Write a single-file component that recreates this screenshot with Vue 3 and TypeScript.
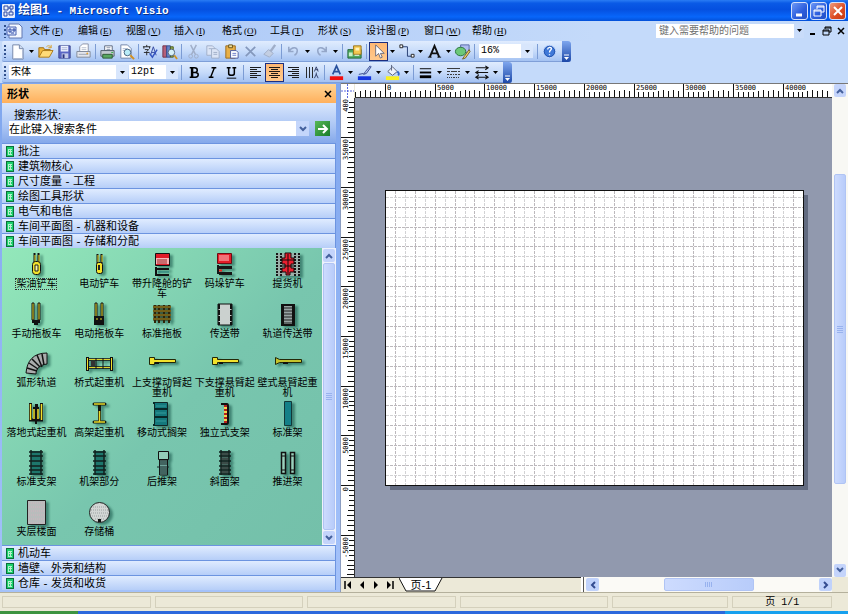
<script setup lang="ts">
import { ref } from 'vue'

interface Tool {
  kind: 'btn' | 'arrow' | 'sep'
  icon?: string
  label?: string
  active?: boolean
}

const b = (icon: string, label: string, active = false): Tool => ({ kind: 'btn', icon, label, active })
const arrow = (label: string): Tool => ({ kind: 'arrow', label })
const sep: Tool = { kind: 'sep' }

const menus = [
  { text: '文件', key: 'F' },
  { text: '编辑', key: 'E' },
  { text: '视图', key: 'V' },
  { text: '插入', key: 'I' },
  { text: '格式', key: 'O' },
  { text: '工具', key: 'T' },
  { text: '形状', key: 'S' },
  { text: '设计图', key: 'P' },
  { text: '窗口', key: 'W' },
  { text: '帮助', key: 'H' },
]

const standardTools: Tool[] = [
  b('new', '新建'), arrow('新建选项'), b('open', '打开'), b('save', '保存'), b('permission', '权限'), sep,
  b('print', '打印'), b('preview', '打印预览'), sep,
  b('spell', '拼写检查'), b('research', '信息检索'), sep,
  b('cut', '剪切'), b('copy', '复制'), b('paste', '粘贴'), b('remove', '删除'), b('painter', '格式刷'), sep,
  b('undo', '撤消'), arrow('撤消选项'), b('redo', '恢复'), arrow('恢复选项'), sep,
  b('shapes', '形状'), sep,
  b('pointer', '指针工具', true), arrow('指针选项'), b('connector', '连接线工具'), arrow('连接线选项'),
  b('text', '文本工具'), arrow('文本选项'), b('drawing', '绘图工具'), sep,
]

const formatTools: Tool[] = [
  sep, b('bold', '加粗'), b('italic', '倾斜'), b('underline', '下划线'), sep,
  b('left', '左对齐'), b('center', '居中', true), b('right', '右对齐'), b('vertical', '竖排文字'), sep,
  b('fontColor', '字体颜色'), arrow('字体颜色选项'), b('lineColor', '线条颜色'), arrow('线条颜色选项'),
  b('fill', '填充颜色'), arrow('填充颜色选项'), sep,
  b('weight', '线条粗细'), arrow('线条粗细选项'), b('pattern', '线型'), arrow('线型选项'),
  b('ends', '线端'), arrow('线端选项'),
]

/* Toolbar glyphs, each on an 18 x 18 grid */
const icons: Record<string, string> = {
  new: '<path d="M4 2h7l4 4v11H4z" fill="#fff" stroke="#7486a8"/><path d="M11 2v4h4" fill="#cfdcf2" stroke="#7486a8"/><path d="M14.500 7v9.500H5" fill="none" stroke="#a8b6d0"/>',
  open: '<path d="M2 15V5h5l1 2h6v3" fill="#f2b83c" stroke="#9a6b14"/><path d="M2 15l4-7h11l-4 7z" fill="#ffdc78" stroke="#a87818"/><path d="M10 4c2-2 4-1 5 1M15 2v3h-3" fill="none" stroke="#d8a030"/>',
  save: '<path d="M3 3h12v13H3z" fill="#5a66c4" stroke="#39448e"/><path d="M5 3h8v6H5z" fill="#eef2ff"/><path d="M6 11h7v5H6z" fill="#c4cbe8"/><path d="M7 12h2v4H7z" fill="#29337e"/><path d="M6 5h6M6 7h6" stroke="#a9b4d4"/>',
  permission: '<path d="M5 9V4l3-3h6v8z" fill="#fff" stroke="#8a93a8"/><path d="M2 9h14v6H2z" fill="#e4e6ec" stroke="#808898"/><path d="M7 5h5M7 7h5" stroke="#b8bfce"/><path d="M4 12h10" stroke="#9da4b4"/><circle cx="13" cy="11" r="1" fill="#e0a030"/>',
  print: '<path d="M6 8V3h8v5z" fill="#fff" stroke="#5a6880"/><path d="M2 8h14v6H2z" fill="#c3cad0" stroke="#52606c"/><path d="M4 12h10v4H4z" fill="#58a860" stroke="#2c5a34"/><path d="M8 5h4M8 7h4" stroke="#8894a8"/><path d="M13 10h2" stroke="#2eae40"/>',
  preview: '<path d="M3 2h7l4 4v10H3z" fill="#fff" stroke="#7486a8"/><path d="M5 6h5M5 8h3" stroke="#a8b6d0"/><circle cx="10" cy="10" r="3.500" fill="#b8ecf8" stroke="#44607c"/><path d="M13 13l4 4" stroke="#d29020" stroke-width="2"/>',
  spell: '<path d="M1 4h8M5 2v2M2 4v2M8 4v2M3 7h4l-2 2v4M2 10h6" fill="none" stroke="#222"/><path d="M9 13l3-9 3 9M10 10h4" fill="none" stroke="#3548a0"/><path d="M8 11l3 4 5-8" fill="none" stroke="#3454c0" stroke-width="1.500"/>',
  research: '<path d="M2 3h4v12H2z" fill="#b4607a" stroke="#713044"/><path d="M6 3h4v12H6z" fill="#6684ca" stroke="#344c90"/><path d="M10 4h3v11h-3z" fill="#90a850" stroke="#506020"/><circle cx="11" cy="10" r="3.500" fill="#d6f0f8" stroke="#53657c"/><path d="M14 13l3 4" stroke="#d09424" stroke-width="2"/>',
  cut: '<path d="M6 2l5 10M12 2L7 12" fill="none" stroke="#a0aec8" stroke-width="1.500"/><circle cx="6" cy="14" r="2" fill="none" stroke="#a0aec8"/><circle cx="12" cy="14" r="2" fill="none" stroke="#a0aec8"/>',
  copy: '<path d="M3 3h6l2 2v8H3z" fill="#dce5f6" stroke="#a0aec8"/><path d="M8 6h5l3 3v7H8z" fill="#dce5f6" stroke="#a0aec8"/><path d="M10 10h4M10 12h4M5 6h3" stroke="#a0aec8"/>',
  paste: '<path d="M3 3h10v13H3z" fill="#e8b048" stroke="#9a6a1c"/><path d="M6 2h4v3H6z" fill="#f0e0a0" stroke="#665218"/><path d="M8 8h6l2 2v6H8z" fill="#fff" stroke="#4b5aa4"/><path d="M10 11h4M10 13h4" stroke="#6878c8"/>',
  remove: '<path d="M4 4l10 10M14 4L4 14" fill="none" stroke="#8498bc" stroke-width="1.800"/>',
  painter: '<path d="M15 2l-5 7" stroke="#a0aec8" stroke-width="2.500"/><path d="M8 7l5 4-4 4-6-3z" fill="#c3cee2" stroke="#a0aec8"/>',
  undo: '<path d="M4 4v5h5M4 9c3-5 9-5 9-1 0 2-1 4-3 5" fill="none" stroke="#94a6c8" stroke-width="1.600"/>',
  redo: '<path d="M14 4v5H9M14 9C11 4 5 4 5 8c0 2 1 4 3 5" fill="none" stroke="#94a6c8" stroke-width="1.600"/>',
  shapes: '<path d="M2 7h14v9H2z" fill="#4ea860" stroke="#24663a"/><path d="M8 3h8v9H8z" fill="#f4c850" stroke="#9a741c"/><path d="M10 5h4v3h-4z" fill="#fff3b8"/><path d="M3 10h4v4H3z" fill="#c8f0c8"/><path d="M9 13h5" stroke="#fff"/>',
  pointer: '<path d="M6 2v12l3-3 2 5 2-1-2-4h4z" fill="#fff" stroke="#6a6a7a"/>',
  connector: '<path d="M4 4h6v10h5" fill="none" stroke="#223a70"/><path d="M2 2h3v3H2zM14 12h3v3h-3z" fill="#fff" stroke="#222"/>',
  text: '<path d="M4 15l5-12 5 12M6 11h6" fill="none" stroke="#111" stroke-width="2"/><path d="M2 15h4M12 15h4" stroke="#111"/>',
  drawing: '<path d="M7 2h9v8H7z" fill="#aebcf0" stroke="#5668a8"/><ellipse cx="7" cy="9" rx="5.500" ry="4.500" fill="#6cc878" stroke="#28743c"/><path d="M16 7l-5 7-2 3 3-1 5-7z" fill="#f4d468" stroke="#73622a"/>',
  help: '<circle cx="9" cy="9" r="6.500" fill="#3f78d8" stroke="#c0d4fa"/><circle cx="9" cy="9" r="5.500" fill="none" stroke="#2454ac"/><path d="M7 7c0-3 4-3 4-1 0 2-2 1-2 4M9 12v1" fill="none" stroke="#fff" stroke-width="1.400"/>',
  bold: '<path d="M5 4h5q3 0 3 2.500T10 9H7h4q3 0 3 2.500T11 14H5M7 4v10M8 4v10" fill="none" stroke="#000" stroke-width="1.600"/>',
  italic: '<path d="M8 4h5M5 14h5M11 4L7 14" fill="none" stroke="#000" stroke-width="1.500"/>',
  underline: '<path d="M4 4h4M10 4h4M6 4v6q0 2 3 2t3-2V4" fill="none" stroke="#000" stroke-width="1.600"/><path d="M4 15h10" stroke="#000"/>',
  left: '<path d="M3 4h12M3 6h8M3 8h12M3 10h8M3 12h12M3 14h8" stroke="#111" shape-rendering="crispEdges"/>',
  center: '<path d="M3 4h12M5 6h8M3 8h12M5 10h8M3 12h12M5 14h8" stroke="#111" shape-rendering="crispEdges"/>',
  right: '<path d="M3 4h12M7 6h8M3 8h12M7 10h8M3 12h12M7 14h8" stroke="#111" shape-rendering="crispEdges"/>',
  vertical: '<path d="M3 3v12M6 3v12M9 3v12" stroke="#222" shape-rendering="crispEdges"/><path d="M11 8l2-5 2 5M12 6h3M13 9v3M11 15l2-4 2 4" fill="none" stroke="#334068"/>',
  fontColor: '<path d="M5 11L9 2l4 9M6 8h6" fill="none" stroke="#28509c" stroke-width="1.800"/><path d="M2 13h14v4H2z" fill="#f01010"/>',
  lineColor: '<path d="M15 2l-5 6-2 3 3-1 5-7z" fill="#b8c6f4" stroke="#34488c"/><path d="M3 11l5-1" stroke="#34488c"/><path d="M2 13h14v4H2z" fill="#1538e0"/>',
  fill: '<path d="M4 8l5-5 5 5-5 4z" fill="#eef2fc" stroke="#55607a"/><path d="M8 1v6" stroke="#55607a"/><path d="M14 8c2 1 2 3 1 4" fill="none" stroke="#3164c8" stroke-width="2"/><path d="M2 13h14v4H2z" fill="#f8f020"/>',
  weight: '<path d="M3 5h12" stroke="#000"/><path d="M3 9h12" stroke="#000" stroke-width="2"/><path d="M3 13.500h12" stroke="#000" stroke-width="3"/>',
  pattern: '<g stroke="#333" shape-rendering="crispEdges"><path d="M2 5h14"/><path d="M2 8h14" stroke-dasharray="3 1"/><path d="M2 11h14" stroke-dasharray="2 1"/><path d="M2 14h14" stroke-dasharray="1 1"/></g>',
  ends: '<path d="M3 4h13M3 9h13M3 14h13M13 2l3 2-3 2M6 7L3 9l3 2M6 12l-3 2 3 2M13 12l3 2-3 2" fill="none" stroke="#111" stroke-width="1.200"/>',
}

const F = '#f2e22c'
const fork = (x: number, w: number, y: number, h: number) =>
  `<path d="M${x} ${y}h${w}v${h}h-${w}z" fill="${F}" stroke="#111"/>`
const rungs = (x: number, w: number, fill: string) =>
  `<path d="M${x} 1h${w}v24h-${w}z" fill="${fill}"/><path d="M${x} 0v25M${x + w} 0v25M${x - 2} 2h${w + 4}M${x - 2} 6h${w + 4}M${x - 2} 11h${w + 4}M${x - 2} 16h${w + 4}M${x - 2} 20h${w + 4}M${x - 2} 24h${w + 4}" stroke="#10201e" stroke-width="1.500"/>`

/* Stencil masters, each on a 30 x 26 grid */
const masters = [
  { name: '柴油铲车', art: '<path d="M13.500 1v10M17.500 1v10" stroke="#111" stroke-width="2"/><path d="M14 3v7M18 3v7" stroke="#f2e22c"/><rect x="11.500" y="9.500" width="8" height="13" rx="3" fill="#f2e22c" stroke="#111"/><path d="M14 13h3v6h-3z" fill="#faf6a0" stroke="#222"/>' },
  { name: '电动铲车', art: '<path d="M13.500 2v9M17.500 2v9" stroke="#111" stroke-width="2"/><path d="M14 3v7M18 3v7" stroke="#f2e22c"/><rect x="12.500" y="10.500" width="6" height="11" rx="2" fill="#f2e22c" stroke="#111"/><path d="M15 13v5" stroke="#222" stroke-width="2"/>' },
  { name: '带升降舱的铲车', art: '<path d="M8.500 1.500h14v12h-14z" fill="#e01c28" stroke="#111"/><path d="M9 6h13v6H9z" fill="#f8b4b8"/><path d="M11 7v5M13 7v5M15 7v5M17 7v5M19 7v5" stroke="#922"/><path d="M9 15v8h13M9 17h13" fill="none" stroke="#111" stroke-width="2"/><path d="M11 20h11" stroke="#237c7c"/>' },
  { name: '码垛铲车', art: '<path d="M7.500 1.500h14v10h-14z" fill="#e41c28" stroke="#6c0c14"/><path d="M10 3v6M12 3v6M14 3v6M16 3v6M18 3v6" stroke="#ffc8c8"/><path d="M7 13h2v9H7zM9 14h13v3H9zM9 20h13v3H9z" fill="#161616"/><path d="M9 18.500h3" stroke="#e22" stroke-width="2"/>' },
  { name: '提货机', art: '<path d="M3 1h24v23H3z" fill="#9aafa8"/><path d="M4 1v23M26 1v23M8 1v23M22 1v23" stroke="#161616" stroke-width="2" stroke-dasharray="2 1"/><path d="M12 1h6v5h3v6h-3v4h3v4h-4v3h-4v-3H9v-4h3v-4H9V6h3z" fill="#ec2030" stroke="#160808"/><path d="M9 8h12M9 14h12M15 2v20" stroke="#160808"/>' },
  { name: '手动拖板车', art: fork(11, 2, 1, 17) + fork(17, 2, 1, 17) + '<path d="M11 18h8v3h-8zM13 21h4v2h-4z" fill="#111"/>' },
  { name: '电动拖板车', art: fork(11, 2, 1, 14) + fork(17, 2, 1, 14) + '<path d="M10 14h10v9H10z" fill="#111"/><path d="M12 17h2M16 17h2" stroke="#e8da2c"/>' },
  { name: '标准拖板', art: '<path d="M6 5h18M6 9h18M6 13h18M6 17h18" stroke="#302408" stroke-width="3"/><path d="M8 3v18M12 3v18M17 3v18M22 3v18" stroke="#302408" stroke-width="2"/><path d="M6 5h18M6 9h18M6 13h18M6 17h18" stroke="#b89a28"/>' },
  { name: '传送带', art: '<path d="M8 2h14v21H8z" fill="#cbd1cf" stroke="#111"/><path d="M9 2v21M21 2v21" stroke="#111" stroke-width="2" stroke-dasharray="5 1"/>' },
  { name: '轨道传送带', art: '<path d="M9 3h12v20H9z" fill="#98a4a4" stroke="#111" stroke-width="2"/><path d="M11 6h8M11 9h8M11 12h8M11 15h8M11 18h8M11 21h8" stroke="#222"/><path d="M10 3v20M20 3v20" stroke="#111" stroke-width="2"/>' },
  { name: '弧形轨道', art: '<path d="M26 2C12 2 6 10 5 22l10 1c0-5 3-9 11-10z" fill="#a9acac" stroke="#111"/><path d="M21 3l2 11M16 4l5 12M11 8l8 8M8 12l9 6M6 17l10 3" stroke="#111" stroke-width="1.500"/>' },
  { name: '桥式起重机', art: '<path d="M3.500 6v14M27.500 6v14" stroke="#111" stroke-width="3"/><path d="M3.500 7v12M27.500 7v12" stroke="#f2e22c"/><path d="M4 8.500h23M4 16.500h23" stroke="#111" stroke-width="2.500"/><path d="M5 8.500h21M5 16.500h21" stroke="#e0d430"/><path d="M12 7v11M19 7v11" stroke="#111"/><path d="M7 10h4v5H7z" fill="#333"/>' },
  { name: '上支撑动臂起重机', art: '<path d="M2.500 6.500h5v2h21v3h-21v2h-5z" fill="#f2e22c" stroke="#232808"/><path d="M8 12h4" stroke="#111" stroke-width="2"/>' },
  { name: '下支撑悬臂起重机', art: '<path d="M2.500 6.500h5v2h21v3h-21v2h-5z" fill="#f2e22c" stroke="#232808"/><path d="M9 12h4" stroke="#111" stroke-width="2"/>' },
  { name: '壁式悬臂起重机', art: '<path d="M2.500 6.500l4 2h22v3h-22l-4 2z" fill="#c6c42c" stroke="#232808"/><path d="M10 12h5" stroke="#111" stroke-width="2"/>' },
  { name: '落地式起重机', art: '<path d="M9.500 2v17h4V6M20.500 2v17h-4V6" fill="none" stroke="#111" stroke-width="3"/><path d="M9.500 3v16M20.500 3v16M13 18V8M17 18V8" stroke="#f2e22c" stroke-width="1.500"/><path d="M14 3h3v5h-3zM14 17h2v6h-2z" fill="#111"/>' },
  { name: '高架起重机', art: '<path d="M10 3h11M10 21h11M15.500 3v18" stroke="#161808" stroke-width="3" stroke-linecap="round"/><path d="M10 3h11M10 21h11M15.500 9v12" stroke="#e8da2c" stroke-width="1.500"/><path d="M14 6h3v4h-3z" fill="#111"/>' },
  { name: '移动式搁架', art: '<path d="M7.500 1.500h13v23h-13z" fill="#14787c" stroke="#102828"/><path d="M7 8h14M7 16h14M6 2h2M6 24h2" stroke="#082828" stroke-width="2"/><path d="M9 5h10M9 12h10M9 20h10" stroke="#349a9a"/>' },
  { name: '独立式支架', art: '<path d="M11 3h6q1 0 1 2v16q0 2-1 2h-6" fill="none" stroke="#111" stroke-width="2"/><path d="M14 4h3v18h-3z" fill="#f2d850"/><path d="M14 5h3M14 9h3M14 13h3M14 17h3M14 21h3" stroke="#b82020" stroke-width="2"/>' },
  { name: '标准架', art: '<path d="M11.500 .500h7v24h-7z" fill="#148088" stroke="#123838"/>' },
  { name: '标准支架', art: rungs(10, 10, '#1d766c') },
  { name: '机架部分', art: rungs(11, 9, '#1d766c') },
  { name: '后推架', art: '<path d="M12.500 10v15h8V10z" fill="#70a49c" stroke="#111"/><path d="M11.500 1.500h10v8h-10z" fill="#93cdb8" stroke="#111"/><path d="M10 17h12M12 12h8M12 14h8M12 19h8M12 21h8M12 23h8" stroke="#142424"/>' },
  { name: '斜面架', art: rungs(11, 8, '#45665f') + '<path d="M11 4h8M11 9h8M11 13h8M11 18h8M11 22h8" stroke="#333"/>' },
  { name: '推进架', art: '<path d="M8.500 2.500h4v21h-4zM17.500 2.500h4v21h-4z" fill="#9ad0bc" stroke="#111" stroke-width="1.500"/><path d="M8 6h5M8 20h5M17 6h5M17 20h5" stroke="#111"/>' },
  { name: '夹层楼面', art: '<path d="M6.500 .500h18v24h-18z" fill="#b9bcbc" stroke="#222"/><path d="M8 3h16M8 7h16M8 11h16M8 15h16M8 19h16M8 23h16" stroke="#cfb4be" stroke-dasharray="1 1"/>' },
  { name: '存储桶', art: '<circle cx="15.500" cy="12.500" r="10" fill="#d2d6d4" stroke="#222"/><path d="M9 7h13M7 10h17M7 13h17M8 16h15M11 19h10" stroke="#9aa0a0" stroke-dasharray="1 1"/><path d="M14 19h3v3h-3z" fill="#111"/>' },
]

const stencilsAbove = ['批注', '建筑物核心', '尺寸度量 - 工程', '绘图工具形状', '电气和电信', '车间平面图 - 机器和设备', '车间平面图 - 存储和分配']
const stencilsBelow = ['机动车', '墙壁、外壳和结构', '仓库 - 发货和收货']

const search = ref('在此键入搜索条件')
const selected = ref(0)

/* Rulers: one major division (5000 mm) is 49.7 px on screen */
const MAJOR = 49.7
interface Tick { at: number; len: number; label: string }
function ticks(origin: number, first: number, last: number, dir: 1 | -1): Tick[] {
  const out: Tick[] = []
  for (let i = first; i <= last; i++) {
    const step = ((i % 10) + 10) % 10
    const beside = dir === 1 ? step < 5 : step > 5
    out.push({
      at: Math.round(origin + (dir * i * MAJOR) / 10),
      len: step === 0 ? 13 : beside ? 5 : step % 2 === 0 ? 7 : 6,
      label: step === 0 ? String(i * 500) : '',
    })
  }
  return out
}
const across = ticks(30, -6, 89, 1)
const down = ticks(387, -18, 77, -1)

const page = { x: 30, y: 92, w: 418, h: 295 }
const gridX = Array.from({ length: 41 }, (_, i) => Math.round(page.x + (i + 1) * 9.94))
const gridY = Array.from({ length: 29 }, (_, i) => Math.round(page.y + page.h - (i + 1) * 9.94))
</script>

<template>
  <div class="window">
    <header class="titlebar">
      <svg class="app-icon" width="13" height="14" viewBox="0 0 13 14">
        <rect width="13" height="14" rx="1" fill="#e8eefc" />
        <path d="M2 2h4v4H2zM8 2h3v3H8zM2 8h3v4H2zM7 8h4v3H7z" fill="none" stroke="#2c48a4" />
        <path d="M6 4h2M9 5v3" stroke="#2c48a4" />
      </svg>
      <h1>绘图1 <span class="latin">- Microsoft Visio</span></h1>
      <button class="win" aria-label="最小化"><svg width="16" height="16"><path d="M4 12h6" stroke="#fff" stroke-width="3" /></svg></button>
      <button class="win" aria-label="还原"><svg width="16" height="16"><path d="M6 6V3h7v6h-3M6 4h7M3 7h7v6H3zM3 8h7" fill="none" stroke="#fff" /></svg></button>
      <button class="win close" aria-label="关闭"><svg width="16" height="16"><path d="M4 4l8 8M12 4l-8 8" stroke="#fff" stroke-width="2" /></svg></button>
    </header>

    <nav class="menubar">
      <span class="grip"></span>
      <svg class="doc-icon" width="17" height="16" viewBox="0 0 17 16">
        <path d="M3 1h10l3 3v11H3z" fill="#f4f8ff" stroke="#6278b0" />
        <path d="M1 4h9v8H1z" fill="#dbe5fc" stroke="#4a62b0" />
        <path d="M3 6h2v3H3zM7 6h2v2H7zM5 10h3" fill="none" stroke="#2c48a4" />
      </svg>
      <button v-for="m in menus" :key="m.key" class="menu">{{ m.text }}<span class="accel">(<u>{{ m.key }}</u>)</span></button>
      <label class="ask">
        <input type="text" aria-label="键入需要帮助的问题" placeholder="键入需要帮助的问题" />
        <span class="drop"><svg width="7" height="4"><path d="M1 0h5L3.500 3z" /></svg></span>
      </label>
      <button class="mini" aria-label="最小化文档"><svg width="10" height="10"><path d="M2 8h5" stroke="#000" stroke-width="2" /></svg></button>
      <button class="mini" aria-label="还原文档"><svg width="10" height="10"><path d="M3 3V1h6v5H7M3 2h6M1 4h6v5H1zM1 5h6" fill="none" stroke="#000" /></svg></button>
      <button class="mini" aria-label="关闭文档"><svg width="10" height="10"><path d="M2 2l6 6M8 2L2 8" stroke="#000" stroke-width="1.500" /></svg></button>
    </nav>

    <div class="toolbar" role="toolbar" aria-label="常用">
      <span class="grip"></span>
      <template v-for="(t, i) in standardTools" :key="i">
        <span v-if="t.kind === 'sep'" class="sep"></span>
        <button v-else-if="t.kind === 'arrow'" class="more" :aria-label="t.label"><svg width="5" height="3"><path d="M0 0h5L2.500 3z" /></svg></button>
        <button v-else class="tool" :class="{ active: t.active }" :aria-label="t.label"><svg width="17" height="17" viewBox="0 0 18 18" v-html="icons[t.icon!]"></svg></button>
      </template>
      <label class="combo zoom">
        <select aria-label="显示比例"><option>16%</option></select>
        <span class="drop"><svg width="5" height="3"><path d="M0 0h5L2.500 3z" /></svg></span>
      </label>
      <span class="sep"></span>
      <button class="tool" aria-label="帮助"><svg width="17" height="17" viewBox="0 0 18 18" v-html="icons.help"></svg></button>
      <button class="cap" aria-label="工具栏选项"><svg width="7" height="7"><path d="M1 1h5" stroke="#fff" /><path d="M1 3h5L3.500 6z" fill="#fff" /></svg></button>
    </div>

    <div class="toolbar" role="toolbar" aria-label="格式">
      <span class="grip"></span>
      <label class="combo family">
        <select aria-label="字体"><option>宋体</option></select>
        <span class="drop"><svg width="5" height="3"><path d="M0 0h5L2.500 3z" /></svg></span>
      </label>
      <label class="combo size">
        <select aria-label="字号"><option>12pt</option></select>
        <span class="drop"><svg width="5" height="3"><path d="M0 0h5L2.500 3z" /></svg></span>
      </label>
      <template v-for="(t, i) in formatTools" :key="i">
        <span v-if="t.kind === 'sep'" class="sep"></span>
        <button v-else-if="t.kind === 'arrow'" class="more" :aria-label="t.label"><svg width="5" height="3"><path d="M0 0h5L2.500 3z" /></svg></button>
        <button v-else class="tool" :class="{ active: t.active }" :aria-label="t.label"><svg width="17" height="17" viewBox="0 0 18 18" v-html="icons[t.icon!]"></svg></button>
      </template>
      <button class="cap" aria-label="工具栏选项"><svg width="7" height="7"><path d="M1 1h5" stroke="#fff" /><path d="M1 3h5L3.500 6z" fill="#fff" /></svg></button>
    </div>

    <main class="workspace">
      <aside class="panel">
        <div class="panel-head">
          <h2>形状</h2>
          <button aria-label="关闭形状窗口"><svg width="8" height="8"><path d="M1 1l6 6M7 1L1 7" stroke="#000" stroke-width="1.500" /></svg></button>
        </div>
        <form class="search" @submit.prevent>
          <label for="shape-search">搜索形状:</label>
          <div class="search-row">
            <div class="search-box">
              <input id="shape-search" v-model="search" type="text" />
              <button type="button" aria-label="搜索记录"><svg width="8" height="6"><path d="M1 1l3 3 3-3" fill="none" stroke="#44609c" stroke-width="2" /></svg></button>
            </div>
            <button type="submit" class="go" aria-label="搜索"><svg width="12" height="12"><path d="M1 6h9M6 2l4 4-4 4" fill="none" stroke="#fff" stroke-width="2" /></svg></button>
          </div>
        </form>

        <button v-for="s in stencilsAbove" :key="s" class="stencil">
          <svg width="8" height="11" shape-rendering="crispEdges"><path d="M0 0h8v11H0z" fill="#0a7038" /><path d="M1 1h6v9H1z" fill="#1cd06c" /><path d="M2 3h4v1H2zM2 5h4v1H2zM2 4h1v4H2zM4 4h1v4H4zM2 8h4v1H2z" fill="#b4f0cc" /></svg>{{ s }}
        </button>

        <div class="masters-area">
          <div class="masters">
            <button v-for="(m, i) in masters" :key="m.name" class="master" @click="selected = i">
              <svg width="30" height="26" viewBox="0 0 30 26" v-html="m.art"></svg>
              <span :class="{ focused: selected === i }">{{ m.name }}</span>
            </button>
          </div>
          <div class="vscroll">
            <button aria-label="向上滚动"><svg width="8" height="6"><path d="M1 5l3-3 3 3" fill="none" stroke="#44609c" stroke-width="2" /></svg></button>
            <span class="thumb"></span>
            <button aria-label="向下滚动"><svg width="8" height="6"><path d="M1 1l3 3 3-3" fill="none" stroke="#44609c" stroke-width="2" /></svg></button>
          </div>
        </div>

        <button v-for="s in stencilsBelow" :key="s" class="stencil">
          <svg width="8" height="11" shape-rendering="crispEdges"><path d="M0 0h8v11H0z" fill="#0a7038" /><path d="M1 1h6v9H1z" fill="#1cd06c" /><path d="M2 3h4v1H2zM2 5h4v1H2zM2 4h1v4H2zM4 4h1v4H4zM2 8h4v1H2z" fill="#b4f0cc" /></svg>{{ s }}
        </button>
      </aside>

      <section class="document">
        <svg class="corner" width="13" height="14"><path d="M0 7h13M6.500 0v14" stroke="#5868e0" stroke-dasharray="2 1" /></svg>
        <svg class="ruler top">
          <g v-for="t in across" :key="t.at">
            <path :d="`M${t.at + 0.5} ${13 - t.len}v${t.len}`" stroke="#111" />
            <text v-if="t.label" :x="t.at + 2" y="6">{{ t.label }}</text>
          </g>
        </svg>
        <div class="vscroll doc-scroll">
          <button aria-label="向上滚动"><svg width="8" height="6"><path d="M1 5l3-3 3 3" fill="none" stroke="#44609c" stroke-width="2" /></svg></button>
          <span class="gap before"></span>
          <span class="thumb"></span>
          <span class="gap after"></span>
          <button aria-label="向下滚动"><svg width="8" height="6"><path d="M1 1l3 3 3-3" fill="none" stroke="#44609c" stroke-width="2" /></svg></button>
        </div>
        <svg class="ruler side">
          <g v-for="t in down" :key="t.at">
            <path :d="`M${13 - t.len} ${t.at + 0.5}h${t.len}`" stroke="#111" />
            <text v-if="t.label" :transform="`translate(7 ${t.at + 2}) rotate(-90)`" text-anchor="end">{{ t.label }}</text>
          </g>
          <text transform="translate(7 1) rotate(-90)" text-anchor="end">400</text>
        </svg>
        <svg class="canvas">
          <rect :x="page.x + 5" :y="page.y + 5" :width="page.w" :height="page.h" fill="#626b80" />
          <rect :x="page.x + 0.5" :y="page.y + 0.5" :width="page.w" :height="page.h" fill="#fff" stroke="#111" />
          <g stroke-dasharray="3 1">
            <path v-for="(x, i) in gridX" :key="'x' + x" :d="`M${x + 0.5} ${page.y + 1}v${page.h - 1}`" :stroke="i % 2 ? '#d2d2d4' : '#bcb8bc'" />
            <path v-for="(y, i) in gridY" :key="'y' + y" :d="`M${page.x + 1} ${y + 0.5}h${page.w - 1}`" :stroke="i % 2 ? '#bcb8bc' : '#d2d2d4'" />
          </g>
        </svg>
        <div class="sheetbar">
          <div class="sheets">
            <button aria-label="第一页"><svg width="8" height="8"><path d="M1 0v8" stroke="#000" stroke-width="1.500" /><path d="M7 0v8L3 4z" /></svg></button>
            <button aria-label="上一页"><svg width="8" height="8"><path d="M6 0v8L2 4z" /></svg></button>
            <button aria-label="下一页"><svg width="8" height="8"><path d="M2 0v8l4-4z" /></svg></button>
            <button aria-label="最后一页"><svg width="8" height="8"><path d="M1 0v8l4-4z" /><path d="M7 0v8" stroke="#000" stroke-width="1.500" /></svg></button>
            <button class="sheet">
              <svg width="44" height="14"><path d="M0 0l7 13h29l7-13" fill="#fff" stroke="#111" /></svg>
              <span>页-1</span>
            </button>
          </div>
          <span class="splitter"></span>
          <div class="hscroll">
            <button aria-label="向左滚动"><svg width="6" height="8"><path d="M5 1L2 4l3 3" fill="none" stroke="#344c90" stroke-width="2" /></svg></button>
            <span class="gap left"></span>
            <span class="thumb"></span>
            <span class="gap right"></span>
            <button aria-label="向右滚动"><svg width="6" height="8"><path d="M1 1l3 3-3 3" fill="none" stroke="#344c90" stroke-width="2" /></svg></button>
          </div>
        </div>
      </section>
    </main>

    <footer class="status">
      <span class="wide"></span><span class="wide"></span><span class="wide"></span><span class="wide"></span>
      <span class="mid"></span><span class="page-no">页 1/1</span>
    </footer>
    <div class="taskbar"><span class="start"></span><span class="tasks"></span><span class="tray"></span></div>
  </div>
</template>

<style>
body {
  margin: 0;
}
</style>

<style scoped>
.window {
  display: flex;
  flex-direction: column;
  height: 100vh;
  overflow: hidden;
  background: #c4dafa;
  color: #000;
  font: 10px/12px "Liberation Sans", "Noto Sans CJK SC", sans-serif;
}
.window * {
  box-sizing: border-box;
}
button,
input,
select {
  margin: 0;
  padding: 0;
  border: 0;
  border-radius: 0;
  background: none;
  color: inherit;
  font: inherit;
  outline: none;
}
button {
  display: flex;
  align-items: center;
  justify-content: center;
  flex: none;
}
svg {
  display: block;
  flex: none;
}

.titlebar {
  display: flex;
  align-items: center;
  gap: 2px;
  flex: none;
  height: 21px;
  padding: 0 2px 0 2px;
  background: linear-gradient(#2a7cf4 0, #0a5ae6 15%, #0550e0 45%, #0866fa 80%, #0350d8 100%);
}
.titlebar h1 {
  flex: 1;
  margin: 0 0 0 1px;
  color: #fff;
  font: bold 12px/18px "Liberation Mono", "Noto Sans CJK SC", monospace;
  text-shadow: 1px 1px #0a2f88;
}
.titlebar .latin {
  font-size: 11px;
}
.win {
  width: 17px;
  height: 18px;
  border: 1px solid #d4e0fa;
  border-radius: 3px;
  background: linear-gradient(135deg, #6d98f6, #2a5cdc 60%, #2350c4);
}
.win.close {
  background: linear-gradient(135deg, #f09a7c, #dc4a20 60%, #c43c14);
}

.menubar {
  display: flex;
  align-items: center;
  flex: none;
  height: 20px;
  padding-left: 4px;
  background: linear-gradient(90deg, #a6c4f6, #c4dafa 70%);
}
.grip {
  flex: none;
  width: 2px;
  height: 13px;
  margin-right: 2px;
  background: repeating-linear-gradient(#30508c 0 2px, transparent 2px 4px);
}
.menubar .grip {
  margin-right: 0;
}
.menu {
  padding: 0 7px;
  white-space: nowrap;
}
.accel {
  width: 14px;
  padding-left: 2px;
  font: 9px/12px "Liberation Serif", serif;
  text-align: left;
}
.ask {
  display: flex;
  flex: none;
  width: 148px;
  height: 14px;
  margin: 0 2px 0 auto;
  background: #fff;
}
.ask input {
  flex: 1;
  min-width: 0;
  padding-left: 3px;
}
.ask input::placeholder {
  color: #707070;
  opacity: 1;
}
.ask .drop {
  width: 10px;
  background: #c9dcfa;
}
.drop {
  display: flex;
  align-items: center;
  justify-content: center;
}
.mini {
  width: 14px;
  height: 14px;
}

.toolbar {
  display: flex;
  align-items: center;
  align-self: flex-start;
  flex: none;
  height: 21px;
  margin-left: 2px;
  padding-left: 2px;
  border-radius: 2px;
  border-bottom: 1px solid #7f9fd8;
  background: linear-gradient(#e0ecfe, #c8dcfa 50%, #a4c2f2);
}
.tool {
  width: 19px;
  height: 19px;
}
.tool.active {
  border: 1px solid #1c2e80;
  background: linear-gradient(#ffb873, #ffc98c);
}
.more {
  width: 9px;
  height: 19px;
}
.sep {
  flex: none;
  width: 1px;
  height: 15px;
  margin: 0 2px;
  background: #7c9cd4;
}
.combo {
  display: grid;
  flex: none;
  height: 14px;
  background: #fff;
}
.combo select,
.combo .drop {
  grid-area: 1 / 1;
}
.combo select {
  appearance: none;
  padding-left: 2px;
}
.combo .drop {
  justify-self: end;
  width: 12px;
  background: #d8e6fc;
  pointer-events: none;
}
.zoom {
  width: 54px;
  margin: 0 2px;
  font-family: "Liberation Mono", monospace;
}
.family {
  width: 119px;
  margin-left: 1px;
}
.size {
  width: 49px;
  margin: 0 1px;
  font-family: "Liberation Mono", monospace;
}
.cap {
  align-items: flex-end;
  width: 9px;
  height: 21px;
  margin: 0 0 -1px 3px;
  padding-bottom: 1px;
  border-radius: 0 3px 3px 0;
  background: linear-gradient(#7ea6ee, #1c48a8);
}

.workspace {
  display: flex;
  flex: 1;
  min-height: 0;
}
.panel {
  display: flex;
  flex-direction: column;
  flex: none;
  width: 341px;
  padding: 1px 4px 2px 2px;
  border-right: 1px solid #8a9cc0;
  background: linear-gradient(#7fa6ee, #a4c2fa);
}
.panel-head {
  display: flex;
  align-items: center;
  justify-content: space-between;
  flex: none;
  height: 19px;
  padding: 0 3px 0 5px;
  background: linear-gradient(#ffd596, #ffb05c);
}
.panel-head h2 {
  margin: 0;
  font-size: 11px;
  line-height: 14px;
}
.panel-head button {
  width: 10px;
  height: 12px;
}
.search {
  flex: none;
  height: 40px;
  padding: 6px 6px 0 7px;
  background: linear-gradient(#d8e6fc, #a9c4f4 60%, #84a8ea);
  font-size: 11px;
}
.search label {
  display: block;
  padding-left: 5px;
  line-height: 12px;
}
.search-row {
  display: flex;
  gap: 6px;
}
.search-box {
  display: flex;
  flex: 1;
  height: 15px;
  background: #fff;
}
.search-box input {
  flex: 1;
  min-width: 0;
}
.search-box button {
  width: 13px;
  background: #c4d6fb;
}
.go {
  width: 15px;
  height: 15px;
  background: linear-gradient(135deg, #58b858, #187c28);
}
.stencil {
  justify-content: flex-start;
  gap: 4px;
  height: 15px;
  padding-left: 4px;
  border-top: 1px solid #6c94e0;
  border-right: 1px solid #6c94e0;
  background: linear-gradient(#e0ecff, #b6cef8);
  font-family: "DejaVu Sans", "Noto Sans CJK SC", sans-serif;
  font-size: 11px;
  line-height: 13px;
}
.masters-area {
  display: flex;
  flex: 1;
  min-height: 0;
}
.masters {
  display: grid;
  flex: 1;
  grid-template-columns: repeat(5, minmax(0, 1fr));
  grid-template-rows: repeat(6, minmax(0, 1fr));
  padding: 0 3px;
  background: linear-gradient(135deg, #93e8ba, #78c6ae 55%, #74c0aa);
}
.master {
  flex-direction: column;
  justify-content: flex-start;
  gap: 1px;
  padding-top: 4px;
  line-height: 10px;
}
.master svg {
  filter: drop-shadow(3px 2px 1px rgba(10, 70, 60, 0.5));
}
.focused {
  outline: 1px dotted #333;
}
.vscroll {
  display: flex;
  flex-direction: column;
  flex: none;
  gap: 1px;
  width: 14px;
  padding: 1px;
  background: #eef2fc;
}
.vscroll button {
  height: 13px;
  border-radius: 2px;
  background: #c4d4fb;
}
.thumb {
  display: flex;
  flex: 1;
  border: 1px solid #b0c4f4;
  border-radius: 2px;
  background: linear-gradient(90deg, #cddbfe, #b8ccfa);
}
.thumb::after {
  content: "";
  width: 6px;
  height: 7px;
  margin: auto;
  background: repeating-linear-gradient(#98b2ee 0 1px, transparent 1px 2px);
}

.document {
  display: grid;
  flex: 1;
  grid-template-columns: 14px minmax(0, 1fr) 16px;
  grid-template-rows: 14px minmax(0, 1fr) 15px;
  min-width: 0;
  border-top: 1px solid #777;
  background: #ece9d8;
}
.corner {
  background: #fff;
}
.ruler {
  width: 100%;
  height: 100%;
  overflow: hidden;
  background: #fff;
  font: 7px "DejaVu Sans Mono", monospace;
}
.top {
  border-bottom: 1px solid #333;
}
.side {
  grid-area: 2 / 1;
  border-right: 1px solid #333;
}
.canvas {
  grid-area: 2 / 2;
  width: 100%;
  height: 100%;
  overflow: hidden;
  background: #9199ae;
}
.doc-scroll {
  grid-area: 1 / 3 / 3 / 4;
  width: 16px;
  padding: 0 2px;
  background: #f8f8f4;
}
.doc-scroll .before {
  flex: 75;
}
.doc-scroll .thumb {
  flex: 310;
}
.doc-scroll .after {
  flex: 78;
}
.sheetbar {
  display: flex;
  grid-area: 3 / 1 / 4 / 3;
}
.sheets {
  display: flex;
  flex: 1;
  min-width: 0;
  border-top: 1px solid #333;
}
.sheets button {
  width: 14px;
}
.sheets .sheet {
  display: grid;
  width: 44px;
  margin-left: 2px;
}
.sheet svg,
.sheet span {
  grid-area: 1 / 1;
}
.sheet span {
  align-self: center;
  font-size: 11px;
}
.splitter {
  width: 3px;
  border-right: 1px solid #555;
  background: #fff;
}
.hscroll {
  display: flex;
  flex: 0 0 248px;
  padding: 1px 0 1px 2px;
  background: #fbfaf6;
}
.hscroll button {
  width: 13px;
  border-radius: 2px;
  background: #c0d2fb;
}
.hscroll .left,
.hscroll .right {
  flex: 66;
}
.hscroll .thumb {
  flex: 90;
}
.hscroll .thumb::after {
  width: 8px;
  height: 5px;
  background: repeating-linear-gradient(90deg, #98b2ee 0 1px, transparent 1px 2px);
}

.status {
  display: flex;
  gap: 4px;
  flex: none;
  height: 19px;
  padding: 3px 16px 3px 2px;
  border-top: 1px solid #b4b09c;
  background: #ece9d8;
}
.status span {
  border: 1px solid #d4d0bc;
}
.wide {
  flex: 150;
}
.mid {
  flex: 117;
}
.page-no {
  flex: 100;
  font: 10px/12px "Liberation Mono", "Noto Sans CJK SC", monospace;
  text-align: center;
}
.taskbar {
  display: flex;
  flex: none;
  height: 3px;
}
.start {
  flex: 78;
  background: #3c9440;
}
.tasks {
  flex: 647;
  background: #2c68dc;
}
.tray {
  flex: 123;
  background: #16a0ee;
}
</style>
